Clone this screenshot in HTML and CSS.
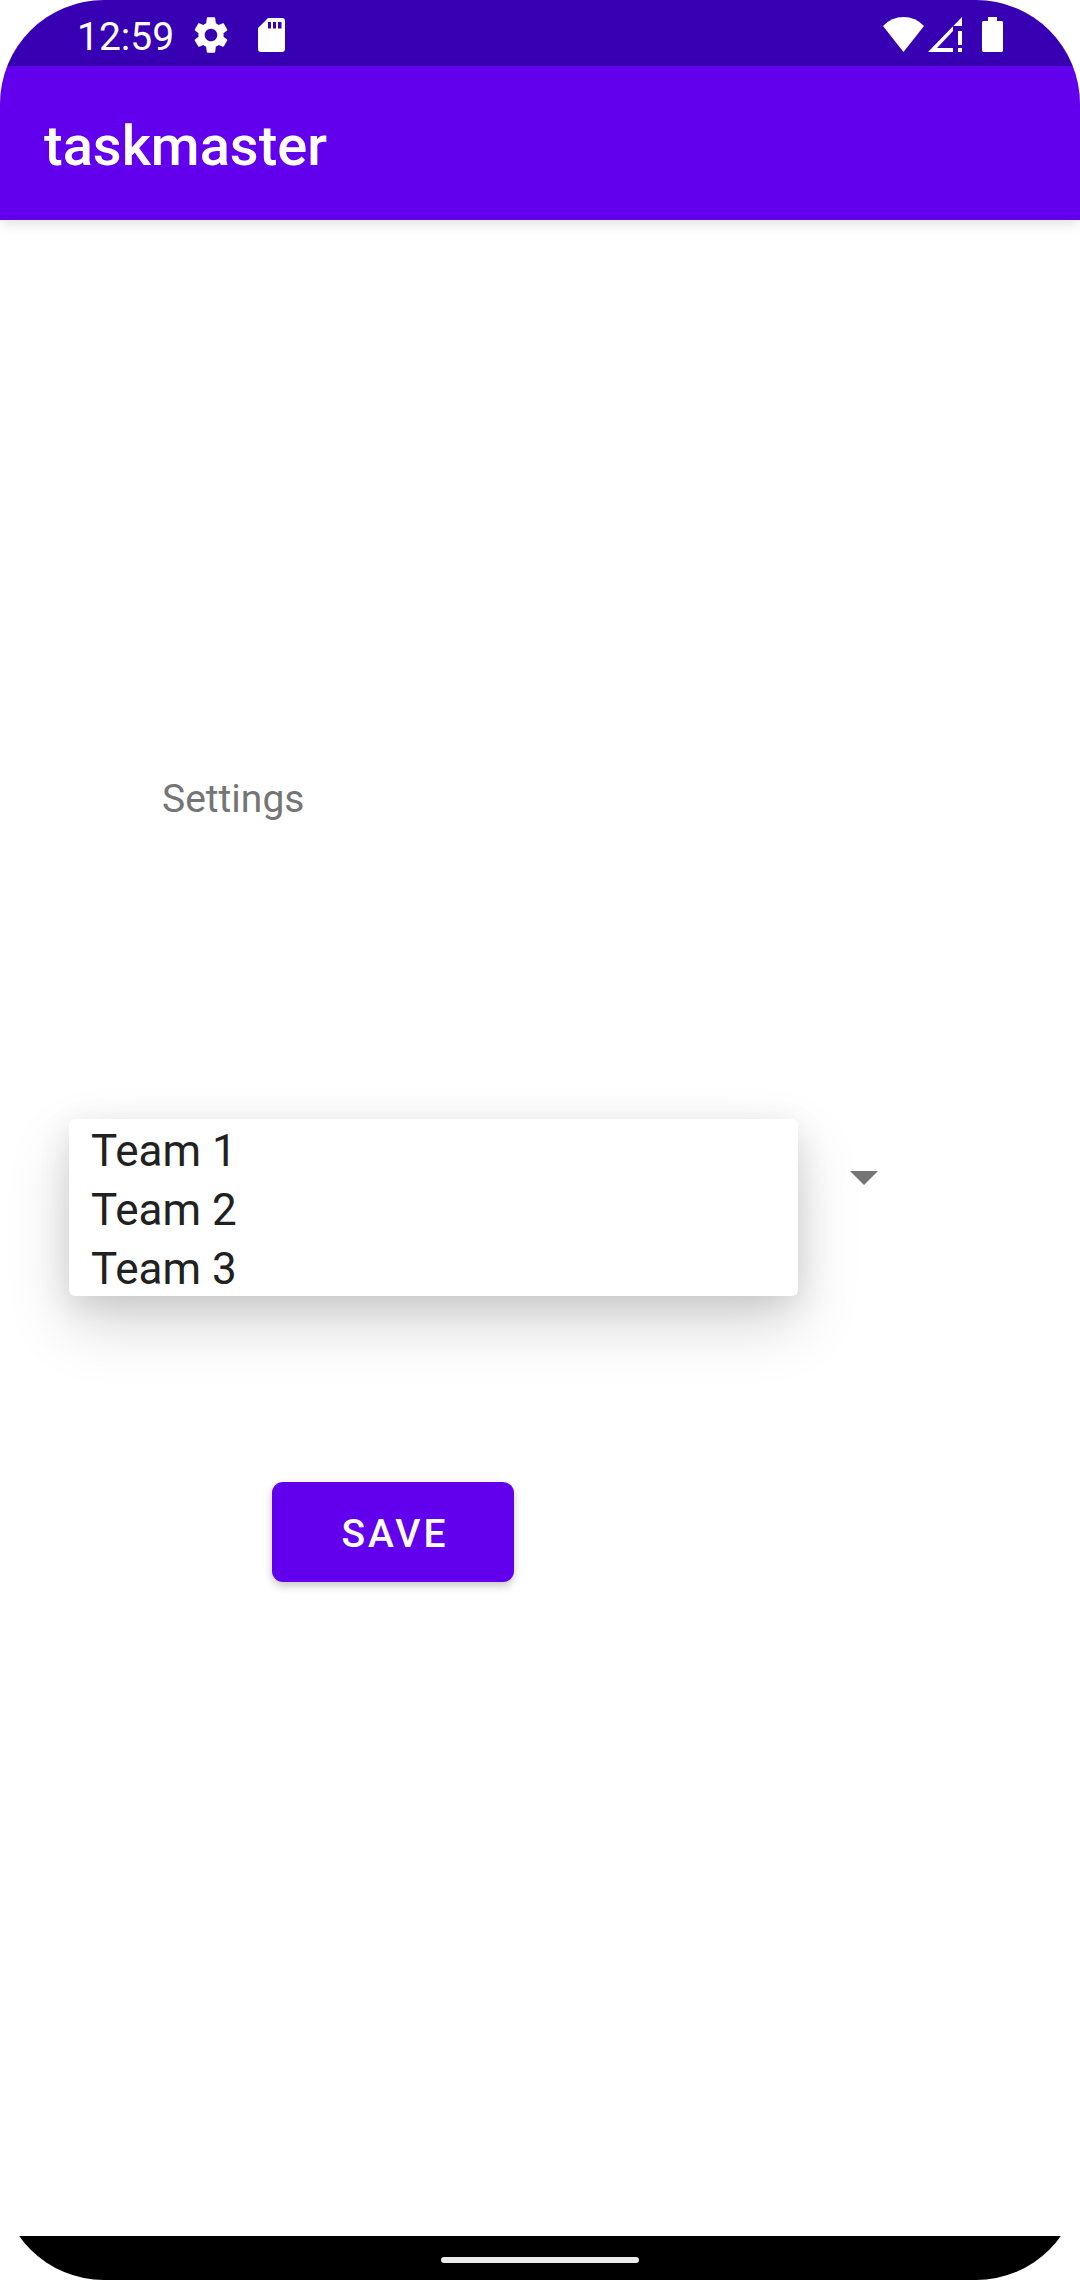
FILE: index.html
```html
<!DOCTYPE html>
<html lang="en">
<head>
<meta charset="utf-8">
<meta name="viewport" content="width=device-width, initial-scale=1">
<title>taskmaster</title>
<link rel="stylesheet" href="styles.css">
</head>
<body>
<div class="screen">
  <div class="status-bar">
    <div class="status-group status-left">
      <span class="clock">12:59</span>
      <svg class="icon gear" viewBox="0 0 24 24" width="42" height="42" aria-hidden="true"><path d="M19.14 12.94c.04-.3.06-.61.06-.94 0-.32-.02-.64-.07-.94l2.03-1.58c.18-.14.23-.41.12-.61l-1.92-3.32c-.12-.22-.37-.29-.59-.22l-2.39.96c-.5-.38-1.03-.7-1.62-.94L14.4 2.3c-.04-.24-.24-.41-.48-.41h-3.84c-.24 0-.43.17-.47.41l-.36 3.05c-.59.24-1.13.57-1.62.94l-2.39-.96c-.22-.08-.47 0-.59.22L2.74 8.87c-.12.21-.08.47.12.61l2.03 1.58c-.05.3-.09.63-.09.94s.02.64.07.94l-2.03 1.58c-.18.14-.23.41-.12.61l1.92 3.32c.12.22.37.29.59.22l2.39-.96c.5.38 1.03.7 1.62.94l.36 3.05c.05.24.24.41.48.41h3.84c.24 0 .44-.17.47-.41l.36-3.05c.59-.24 1.13-.56 1.62-.94l2.39.96c.22.08.47 0 .59-.22l1.92-3.32c.12-.22.07-.47-.12-.61l-2.01-1.58zM12 15.6c-1.98 0-3.6-1.62-3.6-3.6s1.62-3.6 3.6-3.6 3.6 1.62 3.6 3.6-1.62 3.6-3.6 3.6z"/></svg>
      <svg class="icon" viewBox="0 0 27 34" width="27" height="34" aria-hidden="true"><path fill-rule="evenodd" d="M10 0H24Q27 0 27 3V31Q27 34 24 34H3Q0 34 0 31V10ZM10 4V10.5H13V4ZM15 4V10.5H18V4ZM20 4V10.5H23.5V4Z"/></svg>
    </div>
    <div class="status-group status-right">
      <svg class="icon" viewBox="0 0 41 35" width="41" height="35" aria-hidden="true"><path d="M0 9Q8.5 0 20.5 0T41 9L20.5 35Z"/></svg>
      <svg class="icon" viewBox="0 0 34 35" width="34" height="35" aria-hidden="true"><path fill-rule="evenodd" d="M34 0V9H25V14L9 31H25V35H0ZM30 14H34V28H30ZM30 31H34V35H30Z"/></svg>
      <svg class="icon battery" viewBox="0 0 21 35" width="21" height="35" aria-hidden="true"><path d="M6 0H15V4H20L21 5V34L20 35H1L0 34V5L1 4H6Z"/></svg>
    </div>
  </div>
  <header class="app-bar"><h1 class="app-title">taskmaster</h1></header>
  <main class="content">
    <label class="caption" for="team">Settings</label>
    <div class="spinner">
      <select class="spinner-select" id="team"><option label=" " selected></option></select>
      <svg class="spinner-arrow" viewBox="0 0 28 14" width="28" height="14" aria-hidden="true"><path d="M0 0H28L14 14Z"/></svg>
      <ul class="menu" role="listbox" aria-label="Team">
        <li class="menu-item" role="option">Team 1</li>
        <li class="menu-item" role="option">Team 2</li>
        <li class="menu-item" role="option">Team 3</li>
      </ul>
    </div>
    <button class="save" type="button">SAVE</button>
  </main>
  <footer class="nav-bar"><span class="nav-handle"></span></footer>
</div>
</body>
</html>
```
FILE: styles.css
```css
* { box-sizing: border-box; }

body {
  margin: 0;
  background: #fff;
  font-family: Roboto, sans-serif;
}

.screen {
  display: flex;
  flex-direction: column;
  min-height: 100vh;
  overflow: hidden;
  border-radius: 104px;
  background: #fff;
}

.status-bar {
  display: flex;
  justify-content: space-between;
  height: 66px;
  padding: 4px 77px 0;
  background: #3700b3;
  color: #fff;
}

.status-group { display: flex; align-items: center; }
.status-left { gap: 16px; }
.status-right { gap: 4px; padding-bottom: 2px; }
.clock { padding-top: 3px; font-size: 39px; line-height: 48px; }
.icon { fill: currentColor; }
.gear { margin-right: 10px; }
.battery { margin-left: 16px; }

.app-bar {
  display: flex;
  align-items: center;
  height: 154px;
  padding: 6px 44px 0;
  background: #6200ee;
  color: #fff;
  box-shadow: 0 4px 12px rgba(0, 0, 0, 0.12);
}

.app-title {
  margin: 0;
  font-size: 56px;
  font-weight: 500;
  line-height: 64px;
}

.content {
  display: flex;
  flex: 1;
  flex-direction: column;
  align-items: flex-start;
  padding: 553px 69px 0;
}

.caption {
  margin-left: 93px;
  color: #757575;
  font-size: 39px;
  line-height: 52px;
}

.spinner {
  position: relative;
  width: 88%;
  margin-top: 294px;
}

.spinner-select {
  display: block;
  width: 100%;
  height: 118px;
  border: 0;
  background: transparent;
  appearance: none;
  font: inherit;
}

.spinner-arrow {
  position: absolute;
  top: 52px;
  right: 20px;
  fill: #757575;
  pointer-events: none;
}

.menu {
  position: absolute;
  top: 0;
  left: 0;
  right: 100px;
  margin: 0;
  padding: 0;
  border-radius: 6px;
  background: #fff;
  box-shadow: 0 28px 64px rgba(0, 0, 0, 0.16), 0 8px 32px rgba(0, 0, 0, 0.1);
  list-style: none;
}

.menu-item {
  height: 59px;
  padding: 0 22px;
  color: #212121;
  font-size: 44px;
  line-height: 64px;
}

.save {
  width: 242px;
  height: 100px;
  margin: 245px 0 0 203px;
  padding: 4px 0 0 4px;
  border: 0;
  border-radius: 11px;
  background: #6200ee;
  color: #fff;
  box-shadow: 0 4px 8px rgba(0, 0, 0, 0.22);
  font-family: inherit;
  font-size: 39px;
  font-weight: 500;
  letter-spacing: 3px;
}

.nav-bar {
  display: flex;
  align-items: center;
  justify-content: center;
  height: 44px;
  padding-top: 4px;
  background: #000;
}

.nav-handle {
  width: 198px;
  height: 6px;
  border-radius: 3px;
  background: #ebebeb;
}
```
